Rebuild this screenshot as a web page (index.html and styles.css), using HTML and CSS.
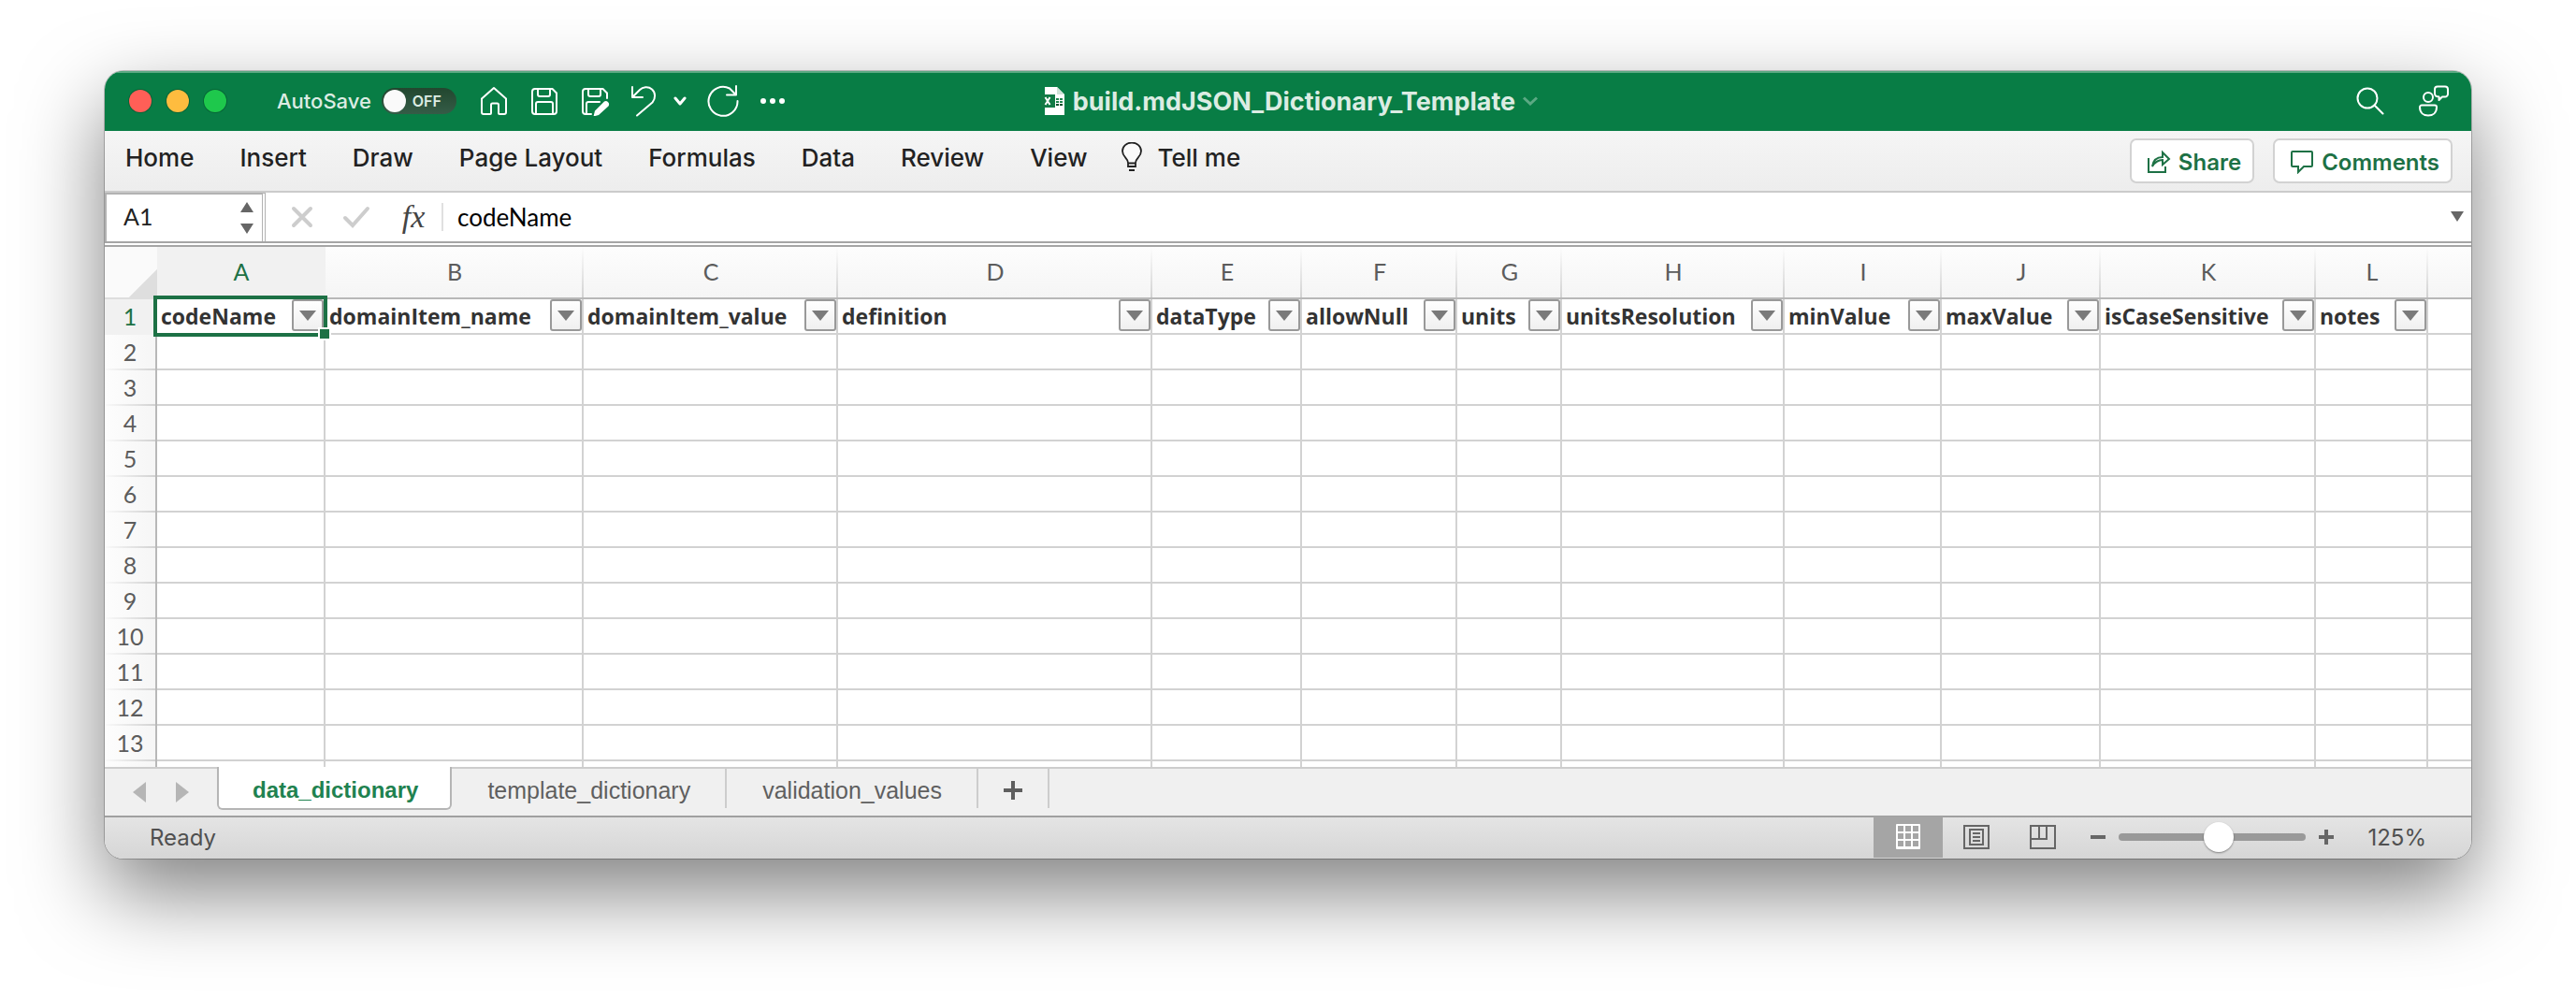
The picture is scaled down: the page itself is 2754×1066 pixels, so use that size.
FILE: index.html
```html
<!DOCTYPE html>
<html lang="en">
<head>
<meta charset="utf-8">
<title>build.mdJSON_Dictionary_Template</title>
<link rel="stylesheet" href="styles.css">
</head>
<body>
<main class="window">
  <header class="titlebar">
    <div class="title-left">
      <div class="lights">
        <button class="light light-close" aria-label="Close"></button>
        <button class="light light-min" aria-label="Minimize"></button>
        <button class="light light-max" aria-label="Zoom window"></button>
      </div>
      <label class="autosave">AutoSave
        <span class="switch"><input type="checkbox" class="switch-input"><span class="switch-state">OFF</span></span>
      </label>
      <div class="quick">
        <button class="icon-btn" aria-label="Home"><svg width="32" height="32" viewBox="0 0 32 32"><path d="M3 13.500 16 2l13 11.500V28a2 2 0 0 1-2 2h-5a1 1 0 0 1-1-1v-9a1.500 1.500 0 0 0-1.500-1.500h-5a1.500 1.500 0 0 0-1.500 1.500v9a1 1 0 0 1-1 1H5a2 2 0 0 1-2-2z"/></svg></button>
        <button class="icon-btn" aria-label="Save"><svg width="32" height="32" viewBox="0 0 32 32"><path d="M3 6a3 3 0 0 1 3-3h18.500L29 7.500V27a3 3 0 0 1-3 3H6a3 3 0 0 1-3-3zM9 3v6a2 2 0 0 0 2 2h9a2 2 0 0 0 2-2V3M7 30V19a2 2 0 0 1 2-2h14a2 2 0 0 1 2 2v11"/></svg></button>
        <button class="icon-btn" aria-label="Save as"><svg width="32" height="32" viewBox="0 0 32 32"><path d="M12 30H6a3 3 0 0 1-3-3V6a3 3 0 0 1 3-3h18.500L29 7.500V13M9 3v6a2 2 0 0 0 2 2h9a2 2 0 0 0 2-2V3M7 30V19a2 2 0 0 1 2-2h12"/><path class="fill" d="M26 16.500a3.500 3.500 0 0 1 4.500 5L20 31l-5.500 1.500L16 26.500z"/></svg></button>
        <div class="undo">
          <button class="icon-btn" aria-label="Undo"><svg width="28" height="34" viewBox="0 0 28 34"><path d="M2 2v11h11M2.500 12.500 10 5C13 2 19 1 23 4.500s4 10 .5 14L7 32.500"/></svg></button>
          <button class="icon-btn" aria-label="Undo history"><svg width="14" height="10" viewBox="0 0 14 10"><path class="thick" d="M2 2l5 6 5-6"/></svg></button>
        </div>
        <button class="icon-btn" aria-label="Redo"><svg width="34" height="34" viewBox="0 0 34 34"><path d="M32.500 17A15.500 15.500 0 1 1 24 3.500L30.500 10M31 1v9.500H21"/></svg></button>
        <button class="icon-btn" aria-label="More"><svg width="28" height="8" viewBox="0 0 28 8"><g class="fill"><circle cx="4" cy="4" r="3"/><circle cx="14" cy="4" r="3"/><circle cx="24" cy="4" r="3"/></g></svg></button>
      </div>
    </div>
    <div class="title">
      <svg width="26" height="30" viewBox="0 0 26 30"><path fill="#fff" d="M4 0h13l8 8v22H4z"/><path fill="#cfe3d8" d="M17 0l8 8h-8z"/><path fill="#127a45" d="M0 8h15v14H0z"/><path stroke="#fff" stroke-width="2" fill="none" d="M4.500 11l5 8M9.500 11l-5 8"/><path fill="#21864f" d="M16 12h3v2h-3zM20 12h3v2h-3zM16 15h3v2h-3zM20 15h3v2h-3z"/><path fill="#0c4f2d" d="M16 18h3v2h-3zM20 18h3v2h-3z"/></svg>
      <h1 class="title-text">build.mdJSON_Dictionary_Template</h1>
      <svg class="title-chevron" width="16" height="10" viewBox="0 0 16 10"><path d="M1 1.500l7 6.500 7-6.500"/></svg>
    </div>
    <div class="title-right">
      <button class="icon-btn" aria-label="Search"><svg width="30" height="30" viewBox="0 0 30 30"><circle cx="12" cy="12" r="10.500"/><path d="M19.500 19.500l9 9"/></svg></button>
      <button class="icon-btn" aria-label="Presence"><svg width="34" height="34" viewBox="0 0 34 34"><circle cx="11" cy="13" r="5"/><path d="M4 21.500h14a2 2 0 0 1 2 2c0 6-4 9-9 9s-9-3-9-9a2 2 0 0 1 2-2zM20 12a3 3 0 0 1-2-2.500v-5a3 3 0 0 1 3-3h8a3 3 0 0 1 3 3v5a3 3 0 0 1-3 3h-3L22.500 16v-3.500z"/></svg></button>
    </div>
  </header>

  <nav class="ribbon">
    <div class="ribbon-tabs">
      <button class="ribbon-tab">Home</button>
      <button class="ribbon-tab">Insert</button>
      <button class="ribbon-tab">Draw</button>
      <button class="ribbon-tab">Page Layout</button>
      <button class="ribbon-tab">Formulas</button>
      <button class="ribbon-tab">Data</button>
      <button class="ribbon-tab">Review</button>
      <button class="ribbon-tab">View</button>
      <button class="ribbon-tab tell-me"><svg width="24" height="32" viewBox="0 0 24 32"><path fill="#fafafa" stroke="#222" stroke-width="1.800" d="M8 22c0-5-6-6-6-12.500a10 9 0 0 1 20 0C22 16 16 17 16 22v4H8zM8 22.500h8"/><path stroke="#222" stroke-width="2" d="M9 30h6"/></svg>Tell me</button>
    </div>
    <div class="ribbon-actions">
      <button class="action"><svg width="26" height="26" viewBox="0 0 26 26"><path d="M2 9v15h18v-6M6 18c1-7 5-10 11-10V3l7 7-7 6v-5c-5 0-8 2-11 7z"/></svg>Share</button>
      <button class="action"><svg width="26" height="26" viewBox="0 0 26 26"><path d="M3 2h20a1 1 0 0 1 1 1v14a1 1 0 0 1-1 1h-8l-6 6v-6H3a1 1 0 0 1-1-1V3a1 1 0 0 1 1-1z"/></svg>Comments</button>
    </div>
  </nav>

  <section class="formula-bar">
    <div class="name-box">
      <input class="name-input" value="A1" aria-label="Name box">
      <svg width="16" height="36" viewBox="0 0 16 36"><path fill="#666" d="M8 1l7 11H1zM8 35l7-11H1z"/></svg>
    </div>
    <div class="formula-tools">
      <button class="icon-btn" aria-label="Cancel"><svg width="26" height="26" viewBox="0 0 26 26"><path stroke="#cdcdcd" stroke-width="4" stroke-linecap="round" d="M4 4l18 18M22 4L4 22"/></svg></button>
      <button class="icon-btn" aria-label="Enter"><svg width="30" height="26" viewBox="0 0 30 26"><path stroke="#cdcdcd" stroke-width="4" stroke-linecap="round" d="M3 14l8 8L27 4"/></svg></button>
      <button class="fx" aria-label="Insert function">fx</button>
    </div>
    <input class="formula-input" value="codeName" aria-label="Formula">
    <button class="icon-btn expand" aria-label="Expand formula bar"><svg width="14" height="12" viewBox="0 0 14 12"><path fill="#666" stroke="none" d="M0 0h14L7 11z"/></svg></button>
  </section>

  <section class="sheet">
    <table class="grid">
      <colgroup><col class="w-head"><col class="w-a"><col class="w-b"><col class="w-c"><col class="w-d"><col class="w-e"><col class="w-f"><col class="w-g"><col class="w-h"><col class="w-i"><col class="w-j"><col class="w-k"><col class="w-l"><col></colgroup>
      <thead>
        <tr><td class="corner"></td><th class="active" scope="col">A</th><th scope="col">B</th><th scope="col">C</th><th scope="col">D</th><th scope="col">E</th><th scope="col">F</th><th scope="col">G</th><th scope="col">H</th><th scope="col">I</th><th scope="col">J</th><th scope="col">K</th><th scope="col">L</th><th scope="col"></th></tr>
      </thead>
      <tbody>
        <tr class="fields">
          <th class="active" scope="row">1</th>
          <td class="selected"><div class="field">codeName<button class="filter" aria-label="Filter codeName"></button></div></td>
          <td><div class="field">domainItem_name<button class="filter" aria-label="Filter domainItem_name"></button></div></td>
          <td><div class="field">domainItem_value<button class="filter" aria-label="Filter domainItem_value"></button></div></td>
          <td><div class="field">definition<button class="filter" aria-label="Filter definition"></button></div></td>
          <td><div class="field">dataType<button class="filter" aria-label="Filter dataType"></button></div></td>
          <td><div class="field">allowNull<button class="filter" aria-label="Filter allowNull"></button></div></td>
          <td><div class="field">units<button class="filter" aria-label="Filter units"></button></div></td>
          <td><div class="field">unitsResolution<button class="filter" aria-label="Filter unitsResolution"></button></div></td>
          <td><div class="field">minValue<button class="filter" aria-label="Filter minValue"></button></div></td>
          <td><div class="field">maxValue<button class="filter" aria-label="Filter maxValue"></button></div></td>
          <td><div class="field">isCaseSensitive<button class="filter" aria-label="Filter isCaseSensitive"></button></div></td>
          <td><div class="field">notes<button class="filter" aria-label="Filter notes"></button></div></td>
          <td></td>
        </tr>
        <tr><th scope="row">2</th><td></td><td></td><td></td><td></td><td></td><td></td><td></td><td></td><td></td><td></td><td></td><td></td><td></td></tr>
        <tr><th scope="row">3</th><td></td><td></td><td></td><td></td><td></td><td></td><td></td><td></td><td></td><td></td><td></td><td></td><td></td></tr>
        <tr><th scope="row">4</th><td></td><td></td><td></td><td></td><td></td><td></td><td></td><td></td><td></td><td></td><td></td><td></td><td></td></tr>
        <tr><th scope="row">5</th><td></td><td></td><td></td><td></td><td></td><td></td><td></td><td></td><td></td><td></td><td></td><td></td><td></td></tr>
        <tr><th scope="row">6</th><td></td><td></td><td></td><td></td><td></td><td></td><td></td><td></td><td></td><td></td><td></td><td></td><td></td></tr>
        <tr><th scope="row">7</th><td></td><td></td><td></td><td></td><td></td><td></td><td></td><td></td><td></td><td></td><td></td><td></td><td></td></tr>
        <tr><th scope="row">8</th><td></td><td></td><td></td><td></td><td></td><td></td><td></td><td></td><td></td><td></td><td></td><td></td><td></td></tr>
        <tr><th scope="row">9</th><td></td><td></td><td></td><td></td><td></td><td></td><td></td><td></td><td></td><td></td><td></td><td></td><td></td></tr>
        <tr><th scope="row">10</th><td></td><td></td><td></td><td></td><td></td><td></td><td></td><td></td><td></td><td></td><td></td><td></td><td></td></tr>
        <tr><th scope="row">11</th><td></td><td></td><td></td><td></td><td></td><td></td><td></td><td></td><td></td><td></td><td></td><td></td><td></td></tr>
        <tr><th scope="row">12</th><td></td><td></td><td></td><td></td><td></td><td></td><td></td><td></td><td></td><td></td><td></td><td></td><td></td></tr>
        <tr><th scope="row">13</th><td></td><td></td><td></td><td></td><td></td><td></td><td></td><td></td><td></td><td></td><td></td><td></td><td></td></tr>
        <tr><th scope="row"></th><td></td><td></td><td></td><td></td><td></td><td></td><td></td><td></td><td></td><td></td><td></td><td></td><td></td></tr>
      </tbody>
    </table>
  </section>

  <nav class="sheet-tabs">
    <div class="sheet-nav">
      <button class="icon-btn" aria-label="Previous sheet"><svg width="14" height="22" viewBox="0 0 14 22"><path fill="#b5b5b5" stroke="none" d="M14 0v22L0 11z"/></svg></button>
      <button class="icon-btn" aria-label="Next sheet"><svg width="14" height="22" viewBox="0 0 14 22"><path fill="#b5b5b5" stroke="none" d="M0 0v22l14-11z"/></svg></button>
    </div>
    <button class="sheet-tab current">data_dictionary</button>
    <button class="sheet-tab">template_dictionary</button>
    <button class="sheet-tab">validation_values</button>
    <button class="sheet-tab add" aria-label="Add sheet"><svg width="20" height="20" viewBox="0 0 20 20"><path fill="#5f5f5f" d="M8 0h4v8h8v4h-8v8H8v-8H0V8h8z"/></svg></button>
  </nav>

  <footer class="status">
    <span class="ready">Ready</span>
    <button class="view on" aria-label="Normal view"><svg width="26" height="28" viewBox="0 0 26 28"><path fill="#fff" fill-rule="evenodd" d="M1 0h24a1 1 0 0 1 1 1v25a1 1 0 0 1-1 1H1a1 1 0 0 1-1-1V1a1 1 0 0 1 1-1zM2 2v6h6V2zm8 0v6h6V2zm8 0v6h6V2zM2 10v6h6v-6zm8 0v6h6v-6zm8 0v6h6v-6zM2 18v6h6v-6zm8 0v6h6v-6zm8 0v6h6v-6z"/></svg></button>
    <button class="view" aria-label="Page layout view"><svg width="28" height="26" viewBox="0 0 28 26"><path stroke="#666" stroke-width="2" d="M1 1h26v24H1zM7 5h14v16H7zM10 9h8M10 13h8M10 17h8"/></svg></button>
    <button class="view" aria-label="Page break preview"><svg width="28" height="26" viewBox="0 0 28 26"><path stroke="#666" stroke-width="2" d="M1 1h26v24H1zM1 15h17V1M10 1v14"/></svg></button>
    <div class="zoom">
      <button class="icon-btn" aria-label="Zoom out"><svg width="16" height="16" viewBox="0 0 16 16"><path fill="#666" stroke="none" d="M0 6h16v4H0z"/></svg></button>
      <input class="slider" type="range" min="0" max="100" value="54" aria-label="Zoom">
      <button class="icon-btn" aria-label="Zoom in"><svg width="16" height="16" viewBox="0 0 16 16"><path fill="#666" stroke="none" d="M6 0h4v6h6v4h-6v6H6v-6H0V6h6z"/></svg></button>
    </div>
    <span class="percent">125%</span>
  </footer>
</main>
</body>
</html>
```
FILE: styles.css
```css
* { box-sizing: border-box; }

body {
  margin: 0;
  height: 100vh;
  padding: 76px 112px 148px;
  display: flex;
  background: #fff;
  font-family: Inter, "Liberation Sans", sans-serif;
  font-size: 24px;
  color: #222;
}

button, input {
  font: inherit;
  color: inherit;
  border: 0;
  padding: 0;
  margin: 0;
  background: none;
}

svg { display: block; flex: none; fill: none; }

.window {
  flex: 1;
  min-width: 0;
  display: flex;
  flex-direction: column;
  overflow: hidden;
  border-radius: 20px;
  background: #fff;
  box-shadow: 0 0 0 1px rgba(0, 0, 0, .22), 0 36px 88px rgba(0, 0, 0, .5);
}

/* Title bar */
.titlebar {
  height: 64px;
  flex: none;
  display: grid;
  grid-template-columns: 1fr auto 1fr;
  align-items: center;
  padding: 0 23px 2px 26px;
  background: #087d45;
  border-top: 2px solid #5ba983;
  color: #dcece3;
}

.title-left, .title, .lights, .autosave, .quick, .undo { display: flex; align-items: center; }
.lights { gap: 16px; }
.light { width: 24px; height: 24px; border-radius: 50%; box-shadow: 0 0 0 1px rgba(0, 0, 0, .2); }
.light-close { background: #ff5f57; }
.light-min { background: #febc3f; }
.light-max { background: #1ec84c; }

.autosave { margin-left: 54px; gap: 11px; font-size: 22px; font-weight: 500; }
.switch {
  position: relative;
  width: 80px;
  height: 28px;
  display: flex;
  align-items: center;
  justify-content: flex-end;
  padding-right: 16px;
  border-radius: 14px;
  background: linear-gradient(#22472f, #355c47);
}
.switch-input { appearance: none; position: absolute; inset: 0; }
.switch-input::before {
  content: "";
  display: block;
  width: 24px;
  height: 24px;
  margin: 2px;
  border-radius: 50%;
  background: #fafafa;
}
.switch-state { font-size: 16px; font-weight: 600; }

.quick { margin-left: 24px; gap: 22px; }
.undo { gap: 18px; }
.icon-btn { display: block; flex: none; }
.titlebar .icon-btn svg { stroke: #fff; stroke-width: 2; stroke-linejoin: round; stroke-linecap: round; }
.titlebar .fill { fill: #fff; stroke: none; }
.titlebar .thick { stroke-width: 3; }

.title { gap: 8px; }
.title-text { margin: 0; font-size: 27px; font-weight: 700; }
.title-chevron { stroke: #5ba983; stroke-width: 3; }
.title-right { display: flex; justify-content: flex-end; align-items: center; gap: 36px; }

/* Ribbon */
.ribbon {
  height: 66px;
  flex: none;
  display: flex;
  justify-content: space-between;
  padding: 7px 20px 0 22px;
  background: linear-gradient(#f5f5f5, #ededed);
  border-bottom: 2px solid #cbcbcb;
}
.ribbon-tabs { display: flex; align-items: flex-start; gap: 49px; }
.ribbon-tab { height: 42px; font-size: 26px; font-weight: 500; white-space: nowrap; }
.tell-me { display: flex; align-items: center; gap: 16px; margin-left: -14px; }
.ribbon-actions { display: flex; gap: 20px; padding-top: 1px; }
.action {
  height: 48px;
  display: flex;
  align-items: center;
  gap: 8px;
  padding: 2px 12px 0 16px;
  border: 2px solid #d2d2d2;
  border-radius: 7px;
  background: #fff;
  color: #1d7145;
  font-weight: 600;
}
.action svg { stroke: #1d7145; stroke-width: 2; }

/* Formula bar */
.formula-bar {
  height: 58px;
  flex: none;
  display: flex;
  align-items: stretch;
  border-bottom: 6px double #a5a5a5;
  font-family: Lato, "Liberation Sans", sans-serif;
}
.name-box {
  width: 172px;
  display: flex;
  align-items: center;
  justify-content: space-between;
  padding: 0 8px 0 18px;
  border: 2px solid #b2b2b2;
  border-right: 4px double #b2b2b2;
  border-bottom: 0;
}
.name-input { width: 100px; height: 30px; margin-bottom: 4px; font-size: 25px; }
.formula-tools { display: flex; align-items: center; gap: 30px; padding: 0 14px 0 26px; }
.fx { font: italic 34px "Liberation Serif", serif; color: #444; line-height: 36px; width: 32px; }
.formula-input { flex: 1; align-self: center; height: 30px; padding-left: 15px; border-left: 2px solid #e0e0e0; color: #000; font-size: 26px; }
.expand { align-self: center; margin-right: 8px; }

/* Grid */
.sheet { flex: 1 1 0; min-height: 0; overflow: hidden; }
.grid {
  width: 100%;
  table-layout: fixed;
  border-collapse: separate;
  border-spacing: 0;
  font-family: Lato, "Liberation Sans", sans-serif;
}
.w-head { width: 56px; }
.w-a { width: 180px; }
.w-b { width: 276px; }
.w-c { width: 272px; }
.w-d { width: 336px; }
.w-e { width: 160px; }
.w-f { width: 166px; }
.w-g { width: 112px; }
.w-h { width: 238px; }
.w-i { width: 168px; }
.w-j { width: 170px; }
.w-k { width: 230px; }
.w-l { width: 120px; }

.grid th { padding: 0 0 2px; font-size: 25px; font-weight: 400; line-height: 30px; color: #5c5c5c; }
.grid thead th, .corner {
  height: 56px;
  border-bottom: 2px solid #b8b8b8;
  background:
    linear-gradient(#fdfdfd, #d2d2d2) right / 2px 100% no-repeat,
    linear-gradient(#fdfdfd, #f5f5f5);
}
.grid thead th:last-child { background: linear-gradient(#fdfdfd, #f5f5f5); }
.grid thead th.active { background: #f1f1f1; color: #1d7145; }
.grid .corner { padding: 0; border-bottom-color: #dedede; background: linear-gradient(135deg, #fafafa 72%, #dedede 73%); }
.grid tbody th {
  height: 38px;
  border-right: 2px solid #b8b8b8;
  background:
    linear-gradient(90deg, #fafafa, #d2d2d2) bottom / 100% 2px no-repeat,
    linear-gradient(90deg, #fdfdfd, #f6f6f6);
}
.grid tbody th.active { background: #f1f1f1; color: #1d7145; }
.grid tbody td {
  padding: 0;
  height: 38px;
  border-right: 2px solid #d2d2d2;
  border-bottom: 2px solid #d2d2d2;
}
.grid tr > :last-child { border-right: 0; }

.field {
  height: 36px;
  display: flex;
  align-items: center;
  justify-content: space-between;
  padding-left: 4px;
  font-family: "Open Sans", "Noto Sans", sans-serif;
  font-size: 23px;
  font-weight: 700;
  color: #333;
}
.filter {
  width: 34px;
  height: 34px;
  flex: none;
  align-self: flex-start;
  display: grid;
  place-items: center;
  border: 2px solid #999;
  border-radius: 3px;
  background: linear-gradient(#fff, #f0f0f0);
}
.filter::before {
  content: "";
  border: 9px solid transparent;
  border-top: 11px solid #7a7a7a;
  border-bottom: 0;
}

.selected { position: relative; }
.selected::before {
  content: "";
  position: absolute;
  inset: -4px;
  border: 4px solid #1d7145;
}
.selected::after {
  content: "";
  position: absolute;
  right: -6px;
  bottom: -6px;
  width: 10px;
  height: 10px;
  background: #1d7145;
  box-shadow: 0 0 0 2px #fff;
}

/* Sheet tabs */
.sheet-tabs {
  height: 54px;
  flex: none;
  display: flex;
  align-items: flex-start;
  border-top: 2px solid #cdcdcd;
  border-bottom: 2px solid #a0a0a0;
  background: #f0f0f0;
  font-family: "Liberation Sans", sans-serif;
}
.sheet-nav { width: 120px; height: 50px; display: flex; align-items: center; gap: 32px; padding-left: 30px; }
.sheet-tab {
  height: 42px;
  padding: 4px 37px 0 38px;
  border-right: 2px solid #cdcdcd;
  color: #5f5f5f;
  font-size: 25px;
}
.sheet-tab.current {
  height: 46px;
  margin-top: -2px;
  padding: 6px 34px 0 36px;
  border: 2px solid #b5b5b5;
  border-top: 0;
  border-radius: 0 0 6px 6px;
  background: #fff;
  color: #1f8250;
  font-size: 24px;
  font-weight: 700;
}
.sheet-tab.add { padding: 4px 27px 0; }

/* Status bar */
.status {
  height: 44px;
  flex: none;
  display: flex;
  align-items: center;
  padding: 0 48px 2px 0;
  background: linear-gradient(#e4e4e4, #d6d6d6);
  color: #505050;
}
.ready { margin: 0 auto 0 48px; }
.view { width: 71px; height: 44px; display: grid; place-items: center; }
.view.on { width: 74px; background: #a5a5a5; }
.zoom { display: flex; align-items: center; gap: 14px; margin-left: 16px; }
.slider { appearance: none; width: 200px; height: 32px; }
.slider::-webkit-slider-runnable-track { height: 8px; border-radius: 4px; background: #999; }
.slider::-webkit-slider-thumb {
  appearance: none;
  width: 32px;
  height: 32px;
  margin-top: -12px;
  border-radius: 50%;
  background: #fff;
  box-shadow: 0 1px 2px rgba(0, 0, 0, .4);
}
.percent { margin-left: 36px; }
```
